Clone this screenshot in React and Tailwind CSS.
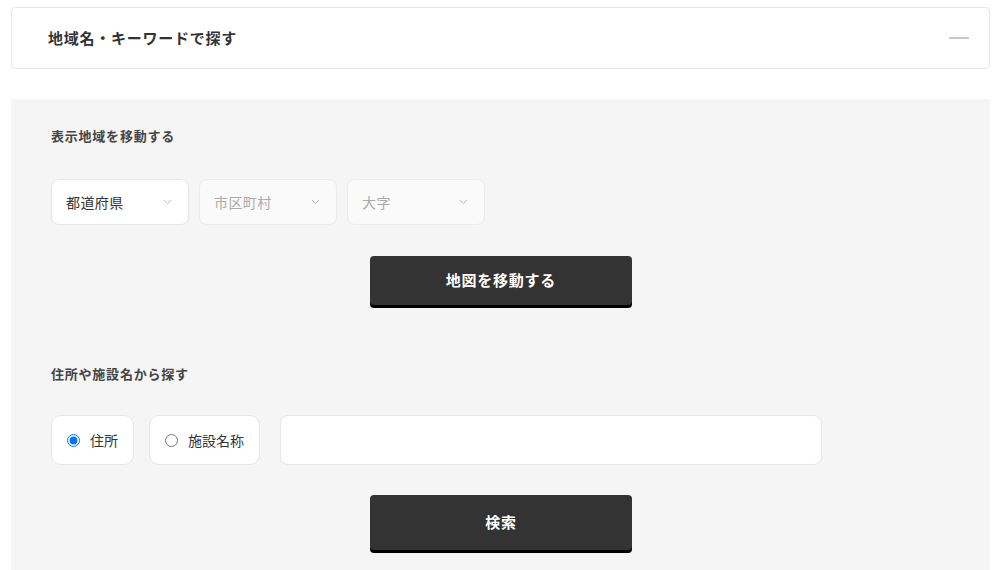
import React, { useState } from "react";

const FONT = { fontFamily: '"Noto Sans CJK JP", "Noto Sans", sans-serif' };

function Chevron() {
    return (
        <svg width="9" height="6" viewBox="0 0 9 6" fill="none">
            <path d="M1 1.2L4.5 4.6L8 1.2" stroke="#b5b5b5" strokeWidth="1" />
        </svg>
    );
}

function SelectBox({ label, disabled }) {
    return (
        <div
            className={`flex items-center justify-between w-[138px] h-[46px] pl-[14px] pr-[16px] rounded-[8px] border ${
                disabled ? "bg-[#fafafa] border-[#ececec] text-[#aaaaaa]" : "bg-white border-[#e6e6e6] text-[#333333]"
            } text-[14px] tracking-[0.03em]`}
        >
            <span>{label}</span>
            <Chevron />
        </div>
    );
}

function RadioBox({ label, checked, onChange, width }) {
    return (
        <label
            className={`flex items-center ${width} h-[50px] pl-[15px] rounded-[10px] border border-[#e6e6e6] bg-white text-[14px] text-[#333333] cursor-pointer`}
        >
            <input
                type="radio"
                name="searchType"
                checked={checked}
                onChange={onChange}
                className="m-0 w-[13px] h-[13px] accent-[#0075ff]"
            />
            <span className="ml-[10px]">{label}</span>
        </label>
    );
}

export default function App() {
    const [type, setType] = useState("address");

    return (
        <div className="min-h-[570px] bg-white px-[11px] pt-[7px]" style={FONT}>
            <div className="flex items-center justify-between h-[62px] pl-[36px] pr-[20px] bg-white border border-[#e6e6e6] rounded-[4px]">
                <span className="text-[15px] font-bold text-[#333333] tracking-[0.05em]">
                    地域名・キーワードで探す
                </span>
                <span className="block w-[20px] h-[2px] bg-[#c8c8c8]" />
            </div>

            <div className="mt-[30px] bg-[#f5f5f5] px-[40px] pt-[27px] pb-[20px]">
                <p className="text-[13px] leading-[20px] font-bold text-[#444444] tracking-[0.06em]">
                    表示地域を移動する
                </p>
                <div className="flex gap-[10px] mt-[33px]">
                    <SelectBox label="都道府県" />
                    <SelectBox label="市区町村" disabled />
                    <SelectBox label="大字" disabled />
                </div>
                <div className="flex justify-center mt-[31px] pl-[1px]">
                    <button className="w-[262px] h-[49px] bg-[#333333] rounded-[4px] shadow-[0_3px_0_#000000] text-white text-[15px] font-bold tracking-[0.05em]">
                        地図を移動する
                    </button>
                </div>

                <p className="mt-[59px] text-[13px] leading-[20px] font-bold text-[#444444] tracking-[0.06em]">
                    住所や施設名から探す
                </p>
                <div className="flex items-center mt-[31px]">
                    <RadioBox
                        label="住所"
                        width="w-[83px]"
                        checked={type === "address"}
                        onChange={() => setType("address")}
                    />
                    <div className="ml-[15px]">
                        <RadioBox
                            label="施設名称"
                            width="w-[111px]"
                            checked={type === "facility"}
                            onChange={() => setType("facility")}
                        />
                    </div>
                    <input
                        type="text"
                        className="ml-[20px] w-[542px] h-[50px] px-[15px] bg-white border border-[#e6e6e6] rounded-[8px] text-[14px] outline-none"
                    />
                </div>
                <div className="flex justify-center mt-[30px] pl-[1px]">
                    <button className="w-[262px] h-[55px] bg-[#333333] rounded-[4px] shadow-[0_3px_0_#000000] text-white text-[15px] font-bold tracking-[0.05em]">
                        検索
                    </button>
                </div>
            </div>
        </div>
    );
}
